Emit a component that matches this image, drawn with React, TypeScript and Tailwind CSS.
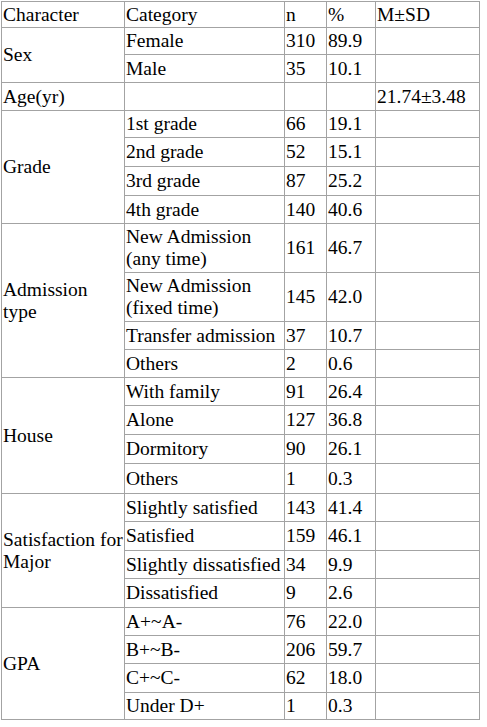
type Row = {
  group?: { label: string; span: number };
  category: string;
  n: string;
  pct: string;
  msd?: string;
  h: number;
};

const rows: Row[] = [
  { group: { label: 'Sex', span: 2 }, category: 'Female', n: '310', pct: '89.9', h: 27 },
  { category: 'Male', n: '35', pct: '10.1', h: 28 },
  { group: { label: 'Age(yr)', span: 1 }, category: '', n: '', pct: '', msd: '21.74±3.48', h: 28 },
  { group: { label: 'Grade', span: 4 }, category: '1st grade', n: '66', pct: '19.1', h: 27 },
  { category: '2nd grade', n: '52', pct: '15.1', h: 29 },
  { category: '3rd grade', n: '87', pct: '25.2', h: 29 },
  { category: '4th grade', n: '140', pct: '40.6', h: 28 },
  { group: { label: 'Admission type', span: 4 }, category: 'New Admission (any time)', n: '161', pct: '46.7', h: 49 },
  { category: 'New Admission (fixed time)', n: '145', pct: '42.0', h: 49 },
  { category: 'Transfer admission', n: '37', pct: '10.7', h: 28 },
  { category: 'Others', n: '2', pct: '0.6', h: 28 },
  { group: { label: 'House', span: 4 }, category: 'With family', n: '91', pct: '26.4', h: 28 },
  { category: 'Alone', n: '127', pct: '36.8', h: 29 },
  { category: 'Dormitory', n: '90', pct: '26.1', h: 29 },
  { category: 'Others', n: '1', pct: '0.3', h: 30 },
  { group: { label: 'Satisfaction for Major', span: 4 }, category: 'Slightly satisfied', n: '143', pct: '41.4', h: 28 },
  { category: 'Satisfied', n: '159', pct: '46.1', h: 29 },
  { category: 'Slightly dissatisfied', n: '34', pct: '9.9', h: 28 },
  { category: 'Dissatisfied', n: '9', pct: '2.6', h: 29 },
  { group: { label: 'GPA', span: 4 }, category: 'A+~A-', n: '76', pct: '22.0', h: 28 },
  { category: 'B+~B-', n: '206', pct: '59.7', h: 28 },
  { category: 'C+~C-', n: '62', pct: '18.0', h: 29 },
  { category: 'Under D+', n: '1', pct: '0.3', h: 27 },
];

const cell = 'border border-[#a3a3a3] px-[1px] py-0 text-left align-middle font-normal';

export default function App() {
  return (
    <div className="min-h-screen bg-white pl-[1px] pt-[1px] text-[19.5px] leading-[22px] text-black" style={{ fontFamily: '"Liberation Serif", "Times New Roman", serif' }}>
      <table className="table-fixed border-collapse">
        <colgroup>
          <col className="w-[123px]" />
          <col className="w-[160px]" />
          <col className="w-[42px]" />
          <col className="w-[49px]" />
          <col className="w-[104px]" />
        </colgroup>
        <thead>
          <tr className="h-[26px]">
            <th className={cell}>Character</th>
            <th className={cell}>Category</th>
            <th className={cell}>n</th>
            <th className={cell}>%</th>
            <th className={cell}>M±SD</th>
          </tr>
        </thead>
        <tbody>
          {rows.map((r, i) => (
            <tr key={i} style={{ height: r.h }}>
              {r.group && (
                <td className={cell} rowSpan={r.group.span}>
                  {r.group.label}
                </td>
              )}
              <td className={cell}>{r.category}</td>
              <td className={cell}>{r.n}</td>
              <td className={cell}>{r.pct}</td>
              <td className={cell}>{r.msd}</td>
            </tr>
          ))}
        </tbody>
      </table>
    </div>
  );
}
